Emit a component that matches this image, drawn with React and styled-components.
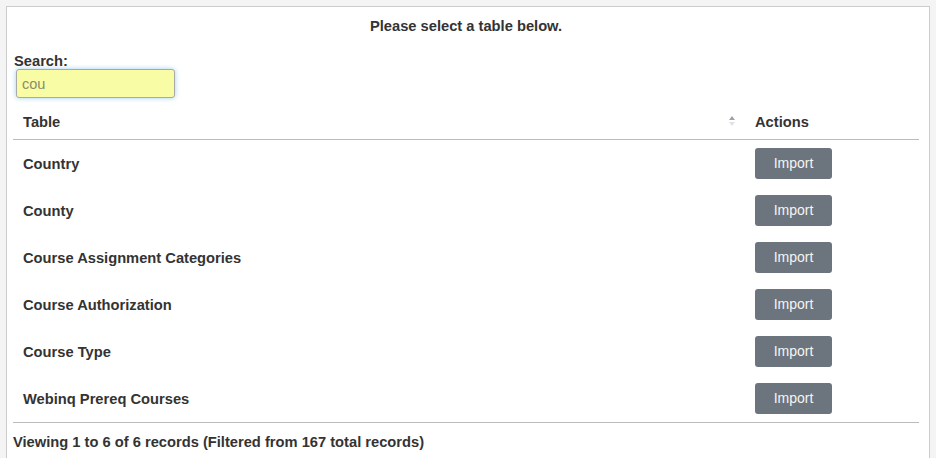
import React from 'react';
import styled, { createGlobalStyle } from 'styled-components';

const GlobalStyle = createGlobalStyle`
  body {
    margin: 0;
    background: #f4f4f4;
    font-family: "Liberation Sans", Arial, sans-serif;
    color: #333;
  }
`

const Panel = styled.div`
  margin: 6px 6px 0 6px;
  border: 1px solid #ccc;
  border-bottom: 0;
  background: #fff;
  padding: 12px 10px 20px 6px;
  min-height: 460px;
`

const Title = styled.div`
  text-align: center;
  font-size: 14.7px;
  font-weight: bold;
  line-height: 15px;
  margin-bottom: 20px;
`

const SearchLabel = styled.label`
  display: block;
  font-size: 14.7px;
  font-weight: bold;
  line-height: 15px;
  padding-left: 1px;
`

const SearchInput = styled.input`
  display: block;
  box-sizing: border-box;
  margin: 0 0 0 3px;
  width: 159px;
  height: 29px;
  padding: 0 5px;
  border: 1px solid #a9a9a9;
  border-radius: 3px;
  background: #f8fca4;
  color: #8c8c6a;
  font-family: "Liberation Sans", Arial, sans-serif;
  font-size: 14.5px;
  box-shadow: 0 0 5px rgba(102, 175, 233, 0.6);
  outline: none;
`

const Table = styled.table`
  width: 100%;
  border-collapse: collapse;
  margin-top: 6px;
  border-bottom: 1px solid #bbb;
`

const HeadCell = styled.th`
  position: relative;
  text-align: left;
  font-size: 14.7px;
  font-weight: bold;
  padding: 11px 10px 9px;
  height: 15px;
  line-height: 15px;
  border-bottom: 1px solid #bbb;
  width: ${p => p.$width || 'auto'};
`

const SortIcon = styled.span`
  position: absolute;
  right: 10px;
  top: 12px;
  display: flex;
  flex-direction: column;
  gap: 2px;
`

const Arrow = styled.span`
  width: 0;
  height: 0;
  border-left: 3px solid transparent;
  border-right: 3px solid transparent;
  ${p => p.$up
    ? 'border-bottom: 4px solid #9aa3ad;'
    : 'border-top: 4px solid #e2e2e2;'}
`

const Cell = styled.td`
  font-size: 14.7px;
  font-weight: bold;
  line-height: 15px;
  padding: ${p => (p.$text ? '9px 10px 7px' : '8px 10px')};
  height: 31px;
`

const ImportButton = styled.button`
  display: block;
  width: 77px;
  height: 31px;
  padding: 0 0 2px;
  border: 0;
  border-radius: 3px;
  background: #6c757d;
  color: #f4f4f4;
  font-family: "Liberation Sans", Arial, sans-serif;
  font-size: 14px;
  cursor: pointer;
`

const Footer = styled.div`
  font-size: 14.7px;
  font-weight: bold;
  line-height: 15px;
  padding-top: 12px;
`

const rows = [
  'Country',
  'County',
  'Course Assignment Categories',
  'Course Authorization',
  'Course Type',
  'Webinq Prereq Courses',
];

export default function App() {
  return (
    <>
      <GlobalStyle />
      <Panel>
        <Title>Please select a table below.</Title>
        <SearchLabel>Search:</SearchLabel>
        <SearchInput defaultValue="cou" />
        <Table>
          <thead>
            <tr>
              <HeadCell $width="712px">
                Table
                <SortIcon>
                  <Arrow $up />
                  <Arrow />
                </SortIcon>
              </HeadCell>
              <HeadCell>Actions</HeadCell>
            </tr>
          </thead>
          <tbody>
            {rows.map(name => (
              <tr key={name}>
                <Cell $text>{name}</Cell>
                <Cell><ImportButton>Import</ImportButton></Cell>
              </tr>
            ))}
          </tbody>
        </Table>
        <Footer>Viewing 1 to 6 of 6 records (Filtered from 167 total records)</Footer>
      </Panel>
    </>
  );
}
